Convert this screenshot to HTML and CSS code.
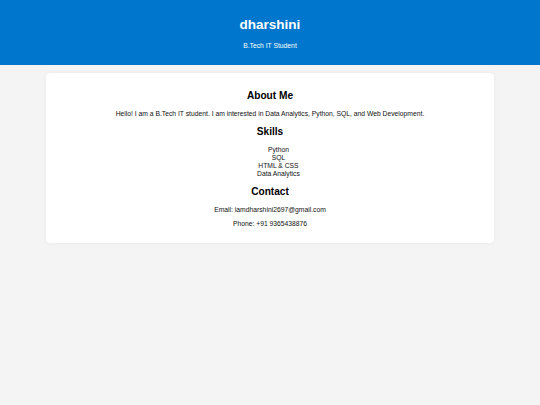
FILE: index.html
```html
<!DOCTYPE html>
<html>
<head>
<meta charset="utf-8">
<title>dharshini</title>
<link rel="stylesheet" href="styles.css">
</head>
<body>
<header class="site-header">
  <h1 class="name">dharshini</h1>
  <p class="tagline">B.Tech IT Student</p>
</header>
<main class="card">
  <section class="block">
    <h2 class="block-title">About Me</h2>
    <p class="text">Hello! I am a B.Tech IT student. I am interested in Data Analytics, Python, SQL, and Web Development.</p>
  </section>
  <section class="block">
    <h2 class="block-title">Skills</h2>
    <ul class="skills">
      <li>Python</li>
      <li>SQL</li>
      <li>HTML &amp; CSS</li>
      <li>Data Analytics</li>
    </ul>
  </section>
  <section class="block">
    <h2 class="block-title">Contact</h2>
    <p class="text">Email: iamdharshini2697@gmail.com</p>
    <p class="text">Phone: +91 9365438876</p>
  </section>
</main>
</body>
</html>
```
FILE: styles.css
```css
html, body {
  margin: 0;
  padding: 0;
}
body {
  font-family: "Liberation Sans", Arial, sans-serif;
  font-size: 6.75px;
  line-height: 7.76px;
  background: #f4f4f4;
  color: #111;
}
.site-header {
  background: #0077cc;
  color: #fff;
  text-align: center;
  padding: 8.44px;
}
.name {
  font-size: 13.5px;
  line-height: 15.5px;
  font-weight: bold;
  margin: 9.05px 0;
}
.tagline {
  font-size: 6.75px;
  line-height: 7.76px;
  margin: 6.75px 0;
}
.card {
  display: block;
  width: 80%;
  margin: 8.44px auto;
  padding: 8.44px;
  background: #fff;
  border-radius: 4.2px;
  box-shadow: 0 0 4px rgba(0, 0, 0, 0.05);
  text-align: center;
}
.block-title {
  font-size: 10.125px;
  line-height: 11.63px;
  font-weight: bold;
  color: #000;
  margin: 8.4px 0;
}
.text {
  margin: 6.75px 0;
}
.skills {
  list-style: none;
  margin: 6.75px 0;
  padding-left: 16.875px;
}
```
